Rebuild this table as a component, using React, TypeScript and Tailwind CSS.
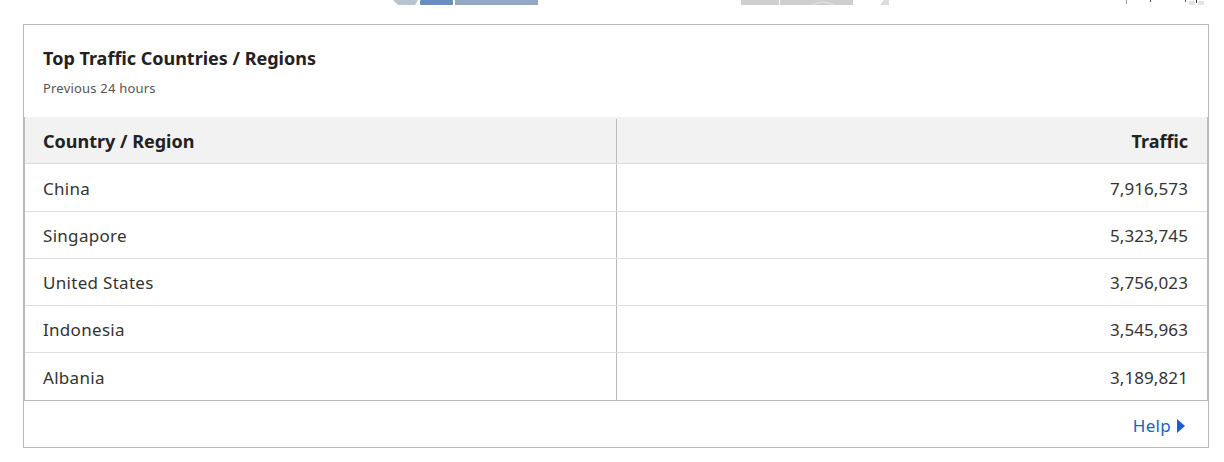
import React from 'react';

const rows: { name: string; traffic: string }[] = [
  { name: 'China', traffic: '7,916,573' },
  { name: 'Singapore', traffic: '5,323,745' },
  { name: 'United States', traffic: '3,756,023' },
  { name: 'Indonesia', traffic: '3,545,963' },
  { name: 'Albania', traffic: '3,189,821' },
];

// Bits of the chart above that peek in at the top of the viewport
function ChartRemnant() {
  return (
    <svg width="1224" height="6" className="block">
      <path d="M393 0 H418 L415 5 H398 Z" fill="#b9c3d2" />
      <rect x="420" y="0" width="33" height="5" rx="1" fill="#6a8cbf" />
      <rect x="455" y="0" width="83" height="5" fill="#94a8c6" />
      <rect x="741" y="0" width="38" height="5" fill="#cfcfcf" />
      <rect x="780" y="0" width="73" height="5" fill="#cfcfcf" />
      <path d="M812 5 Q822 -1 834 5" stroke="#e6e6e6" fill="none" />
      <path d="M880 5 L884 0 H889 V5 Z" fill="#dcdcdc" />
      <rect x="1126" y="0" width="1" height="4" fill="#999" />
      <rect x="1150" y="0" width="1" height="2" fill="#555" />
      <rect x="1185" y="0" width="1" height="2" fill="#555" />
      <rect x="1196" y="0" width="1" height="3" fill="#333" />
      <rect x="1189" y="1" width="6" height="4" fill="#e4e4e4" />
      <rect x="1198" y="1" width="6" height="4" fill="#e4e4e4" />
    </svg>
  );
}

const rowHeights = ['h-[48px]', 'h-[47px]', 'h-[47px]', 'h-[47px]', 'h-[47px]'];

export default function App() {
  return (
    <div className="w-[1224px] h-[462px] bg-white text-[#333] font-['Noto_Sans','Open_Sans',sans-serif]">
      <ChartRemnant />
      <div className="ml-[23px] mt-[18px] w-[1186px] border border-[#bbb]">
        {/* Card heading */}
        <div className="px-[19px] pt-[21px] pb-[20px]">
          <h2 className="text-[18px] leading-[24px] font-bold text-[#222]">Top Traffic Countries / Regions</h2>
          <p className="mt-[9px] text-[13px] leading-[18px] tracking-[0.2px] text-[#555]">Previous 24 hours</p>
        </div>

        {/* Table */}
        <div className="border-x border-b border-[#bbb]">
          <div className="flex h-[47px] pt-[2px] bg-[#f2f2f2] border-b border-[#ddd] text-[18px] font-bold text-[#222]">
            <div className="w-[592px] flex items-center pl-[18px] border-r border-[#bbb]">Country / Region</div>
            <div className="flex-1 flex items-center justify-end pr-[19px]">Traffic</div>
          </div>
          {rows.map((r, i) => (
            <div
              key={r.name}
              className={`flex text-[17px] tracking-[0.3px] ${rowHeights[i]} ${
                i === rows.length - 1 ? '' : 'border-b border-[#ddd]'
              }`}
            >
              <div className="w-[592px] flex items-center pl-[18px] pt-[2px] border-r border-[#bbb]">{r.name}</div>
              <div className="flex-1 flex items-center justify-end pr-[19px] pt-[2px] tracking-[0.1px]">{r.traffic}</div>
            </div>
          ))}
        </div>

        <div className="h-[46px] pt-[4px] flex items-center justify-end pr-[23px]">
          <a href="#" className="flex items-center gap-[6px] text-[17px] tracking-[0.3px] text-[#1a5fcf]">
            Help
            <svg width="8" height="14" viewBox="0 0 8 14">
              <path d="M0 0 L8 7 L0 14 Z" fill="#1a5fcf" />
            </svg>
          </a>
        </div>
      </div>
    </div>
  );
}
